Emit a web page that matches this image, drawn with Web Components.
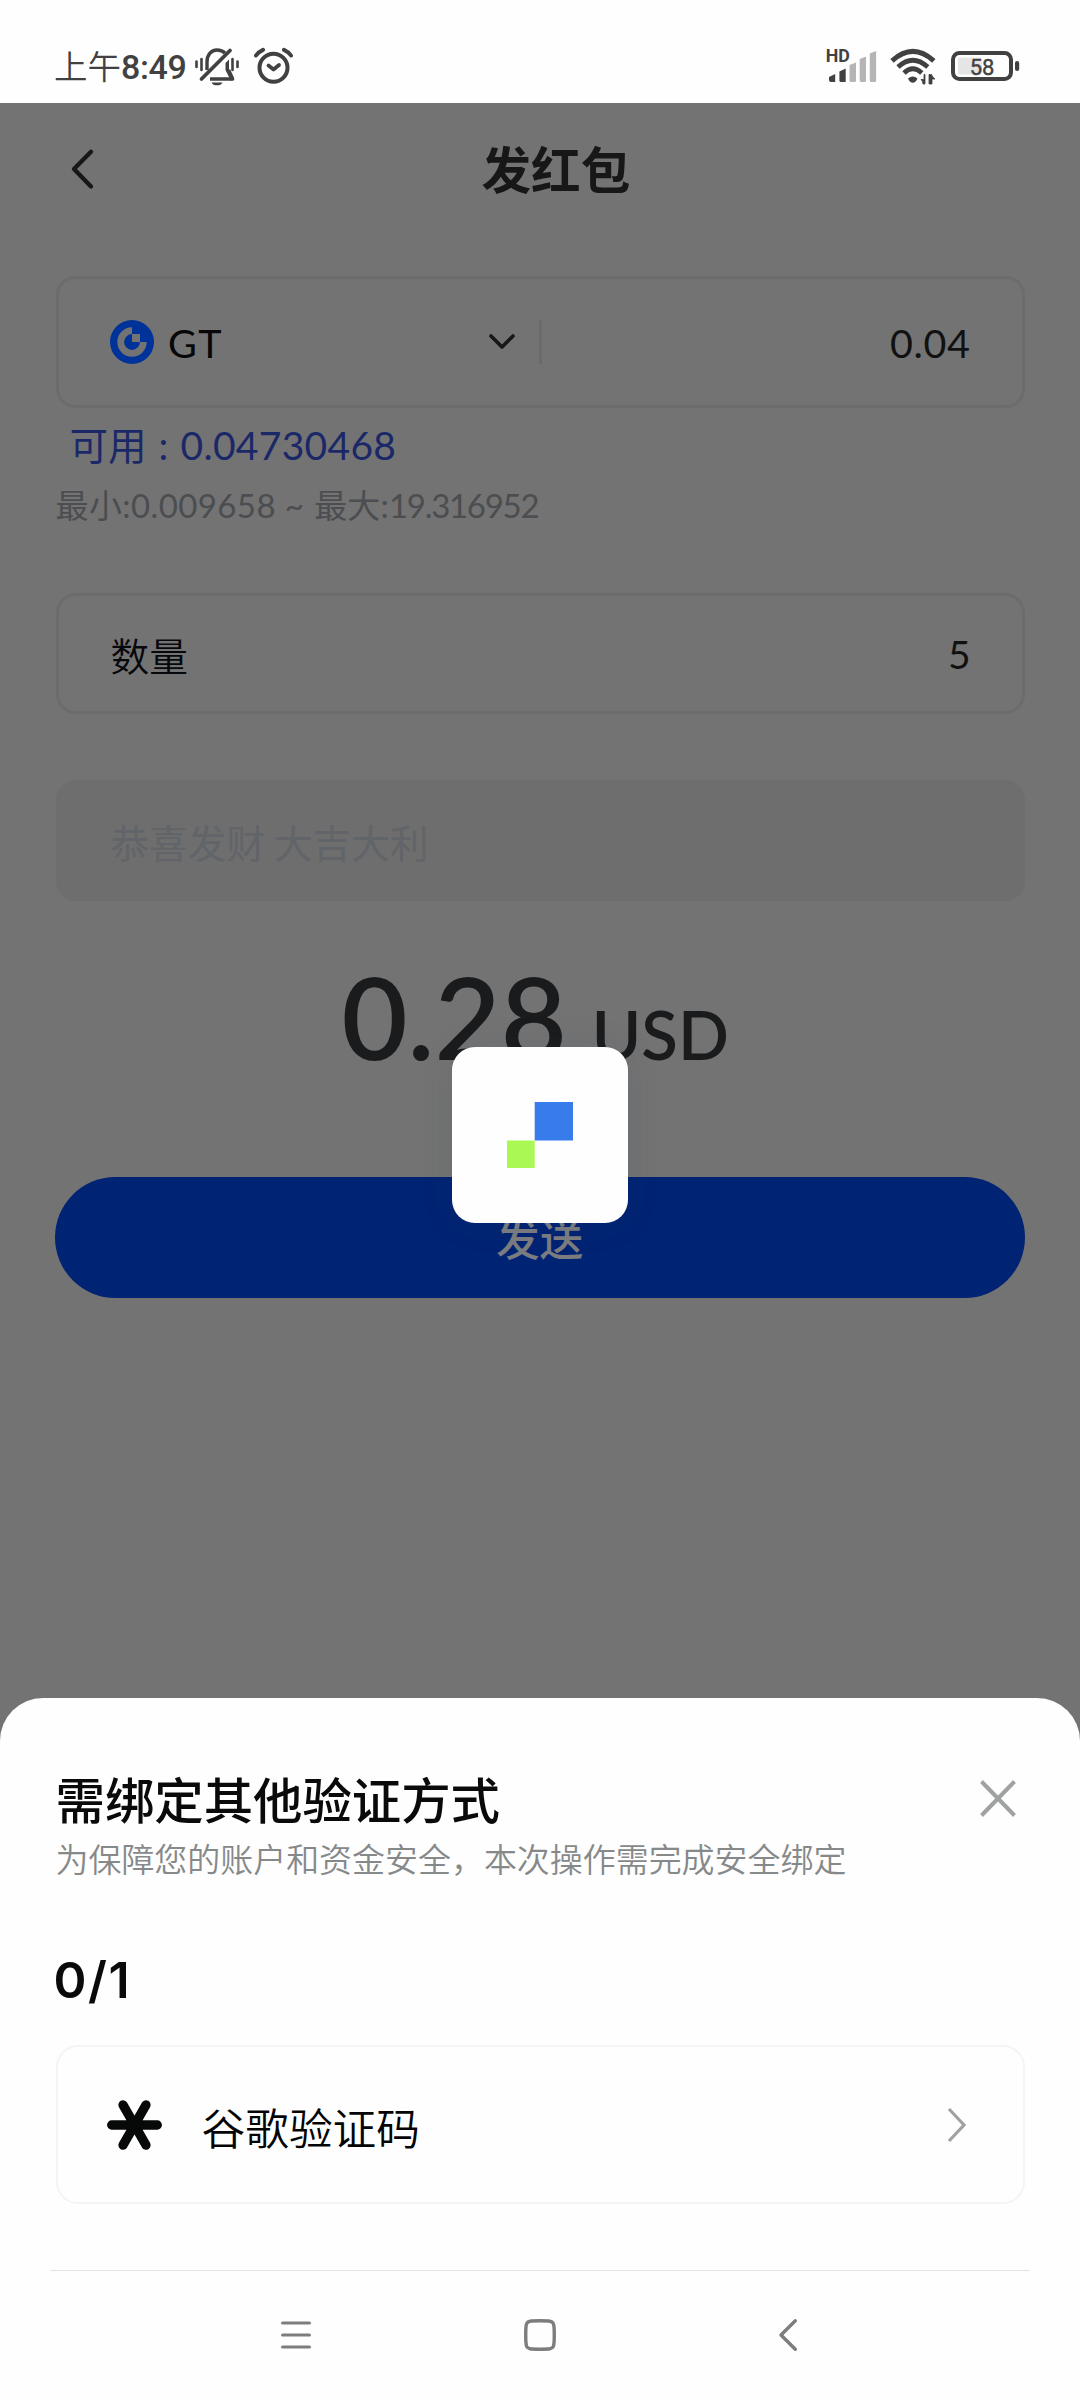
<!DOCTYPE html>
<html lang="zh-CN">
<head>
<meta charset="utf-8">
<title>发红包</title>
<style>
  html, body { margin: 0; padding: 0; }
  body {
    width: 1080px; height: 2400px; overflow: hidden; background: #737373;
    font-family: Lato, "Noto Sans CJK SC", sans-serif;
  }
</style>
</head>
<body>
<phone-screen>
  <status-bar slot="status" time="8:49" level="58"></status-bar>
  <page-header>发红包</page-header>
  <amount-field coin="GT" value="0.04"></amount-field>
  <balance-info available="0.04730468" min="0.009658" max="19.316952"></balance-info>
  <form-field style="margin-top:69px" value="5">数量</form-field>
  <form-field style="margin-top:66px" muted>恭喜发财 大吉大利</form-field>
  <usd-total value="0.28" unit="USD"></usd-total>
  <send-button>发送</send-button>
  <loading-badge slot="loading"></loading-badge>
  <verify-sheet slot="sheet" progress="0/1">
    <span slot="title">需绑定其他验证方式</span>
    <span slot="subtitle">为保障您的账户和资金安全，本次操作需完成安全绑定</span>
    <method-item>谷歌验证码</method-item>
  </verify-sheet>
  <nav-bar slot="sheet"></nav-bar>
</phone-screen>

<script>
const define = (name, render) => customElements.define(name, class extends HTMLElement {
  connectedCallback() {
    if (this.shadowRoot) return;
    this.attachShadow({ mode: 'open' }).innerHTML =
      '<style>:host,*{box-sizing:border-box} svg{display:block;flex:none;overflow:visible}</style>' +
      render(name => this.getAttribute(name) || '');
  }
});

define('phone-screen', () => `
  <style>
    :host { display: flex; flex-direction: column; position: relative; width: 1080px; height: 2400px; background: #737373; }
    main { height: 1595px; flex: none; padding: 0 55.5px; display: flex; flex-direction: column; }
    .loading { position: absolute; left: 452px; top: 1047px; }
    .sheet { flex: 1; background: #fefefe; border-radius: 43px 43px 0 0; display: flex; flex-direction: column; }
  </style>
  <slot name="status"></slot>
  <main><slot></slot></main>
  <div class="sheet"><slot name="sheet"></slot></div>
  <div class="loading"><slot name="loading"></slot></div>`);

define('status-bar', a => `
  <style>
    :host { display: flex; justify-content: space-between; height: 103px; flex: none; background: #fefefe;
            padding: 48px 60px 0 54px; color: #414141; }
    .left, .right { display: flex; align-items: flex-start; }
    .cjk { font: 350 33.5px/40px "Noto Sans CJK SC", sans-serif; margin-top: -3px; }
    .time { font: 500 34px/40px Roboto, sans-serif; margin-top: -1px; letter-spacing: -.4px; }
  </style>
  <div class="left">
    <span class="cjk">上午</span><span class="time">${a('time')}</span>
    <svg width="44" height="38" viewBox="0 0 44 38" style="margin-left:9px" fill="none" stroke="#414141">
      <path d="M12 22V14C12 7 16 2 22 2C25 2 28 3 30 5" stroke-width="3.4"/>
      <path d="M33.500 22L37.500 31H15" stroke-width="3.6" stroke-linejoin="round"/>
      <path d="M30.500 15L34 11.500V21L39 30L36 33L30.500 22Z" fill="#414141" stroke="none"/>
      <path d="M6.500 31L35 2.500" stroke-width="3.800" stroke-linecap="round"/>
      <path d="M16.500 34.500H27.500C26 38.300 18 38.300 16.500 34.500Z" fill="#414141" stroke="none"/>
      <path d="M1.500 13.500V19M6.500 11V22M37.500 11V22M42.500 13.500V19" stroke-width="2.600" stroke-linecap="round"/>
    </svg>
    <svg width="39" height="37" viewBox="0 0 39 37" style="margin-left:15px" fill="none" stroke="#414141" stroke-linecap="round">
      <circle cx="19.500" cy="19.800" r="14" stroke-width="4"/>
      <path d="M14.500 17.500L19.500 21.500L25 17" stroke-width="3.800" stroke-linejoin="round"/>
      <path d="M2 7.500Q4.500 3.800 9 1.800M37 7.500Q34.500 3.800 30 1.800" stroke-width="4"/>
    </svg>
  </div>
  <div class="right">
    <svg width="52" height="36" viewBox="0 0 52 36">
      <text x="-1.300" y="14.300" font-family="Roboto, sans-serif" font-weight="700" font-size="17.800" fill="#414141">HD</text>
      <g fill="#414141"><path d="M2 29L8.200 26V34H4Q2 34 2 32Z"/><path d="M12.400 23.500L18.700 20.500V34H14Q12.400 34 12.400 32.500Z"/></g>
      <g fill="#b5b5b5"><path d="M22.500 17L29 14.500V32.500Q29 34 27.500 34H24Q22.500 34 22.500 32.500Z"/><path d="M32.700 11L39 8.500V32.500Q39 34 37.500 34H34.200Q32.700 34 32.700 32.500Z"/><path d="M42.800 5.500L49.100 3V32.500Q49.100 34 47.600 34H44.300Q42.800 34 42.800 32.500Z"/></g>
    </svg>
    <svg width="46" height="37" viewBox="0 0 46 37" style="margin-left:11px" fill="none" stroke="#414141">
      <path d="M2 12.800Q22.800 -6 43.800 12.800" stroke-width="5"/>
      <path d="M8 19Q22.800 5.500 37.800 19" stroke-width="4.800"/>
      <path d="M14 25Q22.800 16.500 31.800 25" stroke-width="4.800"/>
      <path d="M18 30.500Q22.800 26.500 27.500 30.500Q25.500 34.800 22.800 34.800Q20 34.800 18 30.500Z" fill="#414141" stroke="none"/>
      <path d="M35 26.500V36H33Q33 33 31 31.500H34V26.500ZM39 26.500H41.500Q42.500 29.500 45 31H42V36H39Z" fill="#414141" stroke="#414141" stroke-width=".8"/>
    </svg>
    <svg width="69" height="34" viewBox="0 0 69 34" style="margin-left:15px">
      <rect x="2" y="5" width="58" height="26" rx="6.500" fill="none" stroke="#414141" stroke-width="4"/>
      <rect x="7" y="9.500" width="24" height="17" rx="2" fill="#e5e5e5"/>
      <rect x="64" y="13" width="4.200" height="10" rx="2" fill="#414141"/>
      <text x="31" y="26.600" text-anchor="middle" font-family="Roboto, sans-serif" font-weight="400" stroke="#414141" stroke-width=".4" font-size="22" fill="#414141">${a('level')}</text>
    </svg>
  </div>`);

define('page-header', () => `
  <style>
    :host { display: flex; align-items: center; height: 131px; flex: none; padding-left: 15px; }
    h1 { margin: 0 0 3px 387px; font: 700 49.6px/60px "Noto Sans CJK SC", sans-serif; color: #171717; }
  </style>
  <svg width="24" height="40" viewBox="0 0 24 40" fill="none" stroke="#171717" stroke-width="4.300" stroke-linecap="round" stroke-linejoin="round"><path d="M20 2.800L3 20L20 37.500"/></svg>
  <h1><slot></slot></h1>`);

define('amount-field', a => `
  <style>
    :host { display: flex; align-items: center; height: 132px; flex: none; margin-top: 42px;
            border: 3px solid #6c6c6c; border-radius: 19px; padding: 0 51px 0 51.5px; font-size: 39.500px; color: #111; }
    .coin { color: #070707; margin-left: 14px; flex: 1; letter-spacing: 1.500px; }
    .bar { width: 3px; height: 44px; background: #6b6b6b; margin-left: 24px; }
    .val { width: 429px; text-align: right; letter-spacing: .6px; }
  </style>
  <svg width="44" height="44" viewBox="0 0 44 44">
    <circle cx="22" cy="22" r="22" fill="#003399"/>
    <path d="M22 10.700A11.300 11.300 0 1 0 33.300 22" fill="none" stroke="#737373" stroke-width="6.800"/>
    <rect x="22" y="14" width="8" height="8" fill="#737373"/>
  </svg>
  <span class="coin">${a('coin')}</span>
  <svg width="26" height="16" viewBox="0 0 26 16" fill="none" stroke="#171717" stroke-width="3.600" stroke-linecap="round" stroke-linejoin="round"><path d="M2 2L13 13L24 2"/></svg>
  <div class="bar"></div>
  <span class="val">${a('value')}</span>`);

define('balance-info', a => `
  <style>
    :host { display: flex; flex-direction: column; gap: 14px; flex: none; padding-top: 12px; }
    .avail { font-size: 39px; line-height: 50px; color: #1b2868; padding-left: 14px; display: flex; letter-spacing: .3px; }
    .avail b { font: 400 38.500px/50px Lato, "Noto Sans CJK SC", sans-serif; width: 89px; letter-spacing: 0; } .avail i { font-style: normal; width: 22px; }
    .range { font-size: 33px; line-height: 40px; color: #4b4d50; white-space: pre; letter-spacing: .4px; padding-top: 1px; margin-bottom: -1px; }
    .max { letter-spacing: -1.300px; } .max span { letter-spacing: .2px; margin-left: 1px; }
  </style>
  <div class="avail"><b>可用</b><i>:</i><span>${a('available')}</span></div>
  <div class="range">最小:${a('min')} ~ <span class="max"><span>最大:</span>${a('max')}</span></div>`);

define('form-field', a => `
  <style>
    :host { display: flex; align-items: center; justify-content: space-between;
            height: 121px; flex: none; border: 3px solid #6c6c6c; border-radius: 20px;
            padding: 0 51px 0 52px; font-size: 39px; line-height: 50px; color: #111; }
    :host([muted]) { background: #6e6e6e; border-color: #6e6e6e; }
    .label { color: #07080c; font: 350 38.700px/50px "Noto Sans CJK SC", sans-serif; }
    :host([muted]) .label { color: #616468; font-weight: 400; }
  </style>
  <span class="label"><slot></slot></span><span>${a('value')}</span>`);

define('usd-total', a => `
  <style>
    :host { display: flex; align-items: baseline; height: 140px; flex: none; margin-top: 45px; padding-left: 286px; color: #1a1b1c; }
    .n { font: 600 114px/140px Lato, sans-serif; }
    .u { font: 600 67px/80px Lato, sans-serif; margin-left: 25px; }
  </style>
  <span class="n">${a('value')}</span><span class="u">${a('unit')}</span>`);

define('send-button', () => `
  <style>
    :host { display: flex; align-items: center; justify-content: center; height: 121px; flex: none; margin: 91px 0 0 -.5px;
            border-radius: 61px; background: #002373; color: #7b7c80; font: 500 43.500px/60px "Noto Sans CJK SC", sans-serif; }
  </style><slot></slot>`);

define('loading-badge', () => `
  <style>
    :host { display: flex; align-items: center; justify-content: center; width: 176px; height: 176px;
            border-radius: 23px; background: #fefefe; box-shadow: 0 0 34px rgba(50,70,110,.1); }
  </style>
  <svg width="66" height="66" viewBox="0 0 66 66"><rect x="27.700" width="38.300" height="38.500" fill="#387cec"/><rect y="38.500" width="27.700" height="27.500" fill="#a9f853"/></svg>`);

define('verify-sheet', a => `
  <style>
    :host { display: block; padding: 72px 55.500px 0; }
    header { display: flex; justify-content: space-between; align-items: flex-start; height: 62px; }
    h2 { margin: -2px 0 0; font: 500 49.400px/60px "Noto Sans CJK SC", sans-serif; color: #0a0a0a; }
    p { margin: 4px 0 0; font: 350 32.960px/44px "Noto Sans CJK SC", sans-serif; color: #868989; }
    .progress { margin-top: 68px; font: 600 50px/64px Inter, sans-serif; letter-spacing: 1.500px; color: #0a0a0a; height: 64px; margin-left: -2px; }
    .list { margin-top: 33px; }
  </style>
  <header><h2><slot name="title"></slot></h2>
    <svg width="36" height="37" viewBox="0 0 36 37" style="margin:10px 9px 0 0" fill="none" stroke="#a0a2a2" stroke-width="4"><path d="M1.500 1.500L34.500 35.500M34.500 1.500L1.500 35.500"/></svg>
  </header>
  <p><slot name="subtitle"></slot></p>
  <div class="progress">${a('progress')}</div>
  <div class="list"><slot></slot></div>`);

define('method-item', () => `
  <style>
    :host { display: flex; align-items: center; height: 159px; border: 2.500px solid #f4f4f4; border-radius: 22px; padding: 0 57px 0 49.500px; }
    .t { flex: 1; margin-left: 39.500px; font: 350 43.700px/60px "Noto Sans CJK SC", sans-serif; color: #050505; padding-top: 2px; }
  </style>
  <svg width="55" height="50" viewBox="0 0 55 50" fill="none" stroke="#070909" stroke-width="9.300" stroke-linecap="round"><path d="M4.700 25H50.300M16 4.900L39 45.100M39 4.900L16 45.100"/></svg>
  <span class="t"><slot></slot></span>
  <svg width="18" height="34" viewBox="0 0 18 34" fill="none" stroke="#a0a2a2" stroke-width="3.200"><path d="M1 1L16 17L1 33"/></svg>`);

define('nav-bar', () => `
  <style>
    :host { display: block; margin: 66px 50px 0; border-top: 1px solid #e2e2e2; }
    div { display: flex; align-items: center; padding: 48px 0 0 231px; }
  </style>
  <div>
    <svg width="30" height="32" viewBox="0 0 30 32" stroke="#7d7d7d" stroke-width="3.200" stroke-linecap="round"><path d="M1.600 4H28.400M1.600 16H28.400M1.600 28H28.400"/></svg>
    <svg width="32" height="32" viewBox="0 0 32 32" style="margin-left:213px" fill="none" stroke="#7d7d7d" stroke-width="3.400"><path d="M16 1.800C26 1.800 28 2 29.300 4.500C30.600 7 30.600 25 29.300 27.500C28 30 26 30.200 16 30.200C6 30.200 4 30 2.700 27.500C1.400 25 1.400 7 2.700 4.500C4 2 6 1.800 16 1.800Z"/></svg>
    <svg width="18" height="32" viewBox="0 0 18 32" style="margin-left:223px" fill="none" stroke="#7d7d7d" stroke-width="3.400" stroke-linecap="round" stroke-linejoin="round"><path d="M16.300 1.700L2 16L16.300 30.300"/></svg>
  </div>`);
</script>
</body>
</html>
